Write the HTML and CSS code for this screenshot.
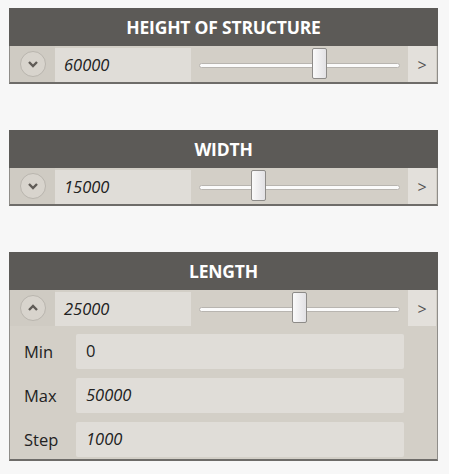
FILE: index.html
```html
<!DOCTYPE html>
<html lang="en">
<head>
    <meta charset="UTF-8">
    <title>Structure Sliders</title>
    <link rel="stylesheet" href="styles.css">
</head>
<body>
    <div class="panel">
        <div class="panel-title">HEIGHT OF STRUCTURE</div>
        <div class="slider-row">
            <div class="toggle-cell"><span class="toggle">
                <svg width="12" height="8" viewBox="0 0 12 8"><path d="M2 2 L6 6 L10 2" /></svg>
            </span></div>
            <div class="value-box">60000</div>
            <div class="track-cell">
                <div class="track"></div>
                <div class="thumb" style="left: 60%"></div>
            </div>
            <div class="next">&gt;</div>
        </div>
    </div>

    <div class="panel">
        <div class="panel-title">WIDTH</div>
        <div class="slider-row">
            <div class="toggle-cell"><span class="toggle">
                <svg width="12" height="8" viewBox="0 0 12 8"><path d="M2 2 L6 6 L10 2" /></svg>
            </span></div>
            <div class="value-box">15000</div>
            <div class="track-cell">
                <div class="track"></div>
                <div class="thumb" style="left: 30%"></div>
            </div>
            <div class="next">&gt;</div>
        </div>
    </div>

    <div class="panel">
        <div class="panel-title">LENGTH</div>
        <div class="slider-row">
            <div class="toggle-cell"><span class="toggle">
                <svg width="12" height="8" viewBox="0 0 12 8"><path d="M2 6 L6 2 L10 6" /></svg>
            </span></div>
            <div class="value-box">25000</div>
            <div class="track-cell">
                <div class="track"></div>
                <div class="thumb" style="left: 50%"></div>
            </div>
            <div class="next">&gt;</div>
        </div>
        <div class="settings">
            <span class="setting-label">Min</span>
            <div class="setting-box plain">0</div>
            <span class="setting-label">Max</span>
            <div class="setting-box">50000</div>
            <span class="setting-label">Step</span>
            <div class="setting-box">1000</div>
        </div>
    </div>
</body>
</html>
```

FILE: styles.css
```css
/* General Styles */
body {
    margin: 0;
    padding: 8px 11px 0 9px;
    background: #f7f7f7;
    font-family: 'Open Sans', 'Noto Sans', sans-serif;
    color: #222;
}

.panel {
    width: 427px;
    border: 1px solid #8f8d89;
    border-top: none;
    border-bottom: 2px solid #6e6c69;
    background: #d3cfc7;
    margin-bottom: 46px;
}

.panel:last-child {
    margin-bottom: 0;
}

.panel-title {
    height: 38px;
    line-height: 38px;
    margin: 0 -1px;
    background: #5c5a57;
    color: #fff;
    font-weight: bold;
    font-size: 17.5px;
    letter-spacing: -0.2px;
    text-align: center;
}

/* slider row */
.slider-row {
    display: flex;
    height: 36px;
}

.toggle-cell {
    width: 45px;
    display: flex;
    align-items: center;
    justify-content: center;
    background: #cfcbc3;
}

.toggle {
    width: 24px;
    height: 24px;
    border-radius: 50%;
    border: 1px solid #b9b5ae;
    background: #d8d4cd;
    display: flex;
    align-items: center;
    justify-content: center;
}

.toggle path {
    fill: none;
    stroke: #5f5b56;
    stroke-width: 2.4;
}

.value-box {
    width: 127px;
    height: 34px;
    margin-top: 2px;
    padding-left: 9px;
    background: #e0ddd8;
    font-style: italic;
    font-size: 16.5px;
    line-height: 33px;
}

.track-cell {
    position: relative;
    width: 201px;
    margin: 0 8px;
}

.track {
    margin-top: 17px;
    height: 3px;
    background: #fbfbfb;
    border: 1px solid #b8b5b0;
    border-radius: 3px;
}

.thumb {
    position: absolute;
    top: 2px;
    width: 13px;
    height: 29px;
    margin-left: -8px;
    border: 1px solid #8d8b88;
    border-radius: 2px;
    background: linear-gradient(to right, #fafafa, #e2e1e4);
}

.next {
    width: 28px;
    background: #e3e0db;
    color: #555;
    font-size: 16px;
    text-align: center;
    line-height: 38px;
}

/* min / max / step */
.settings {
    display: grid;
    grid-template-columns: 52px 328px;
    grid-auto-rows: 35px;
    row-gap: 9px;
    padding: 8px 0 2px 14px;
}

.setting-label {
    font-size: 16.5px;
    line-height: 36px;
    color: #222;
}

.setting-box {
    background: #e0ddd8;
    border-radius: 2px;
    padding-left: 10px;
    font-style: italic;
    font-size: 16.5px;
    line-height: 34px;
}

.setting-box.plain {
    font-style: normal;
}
```
